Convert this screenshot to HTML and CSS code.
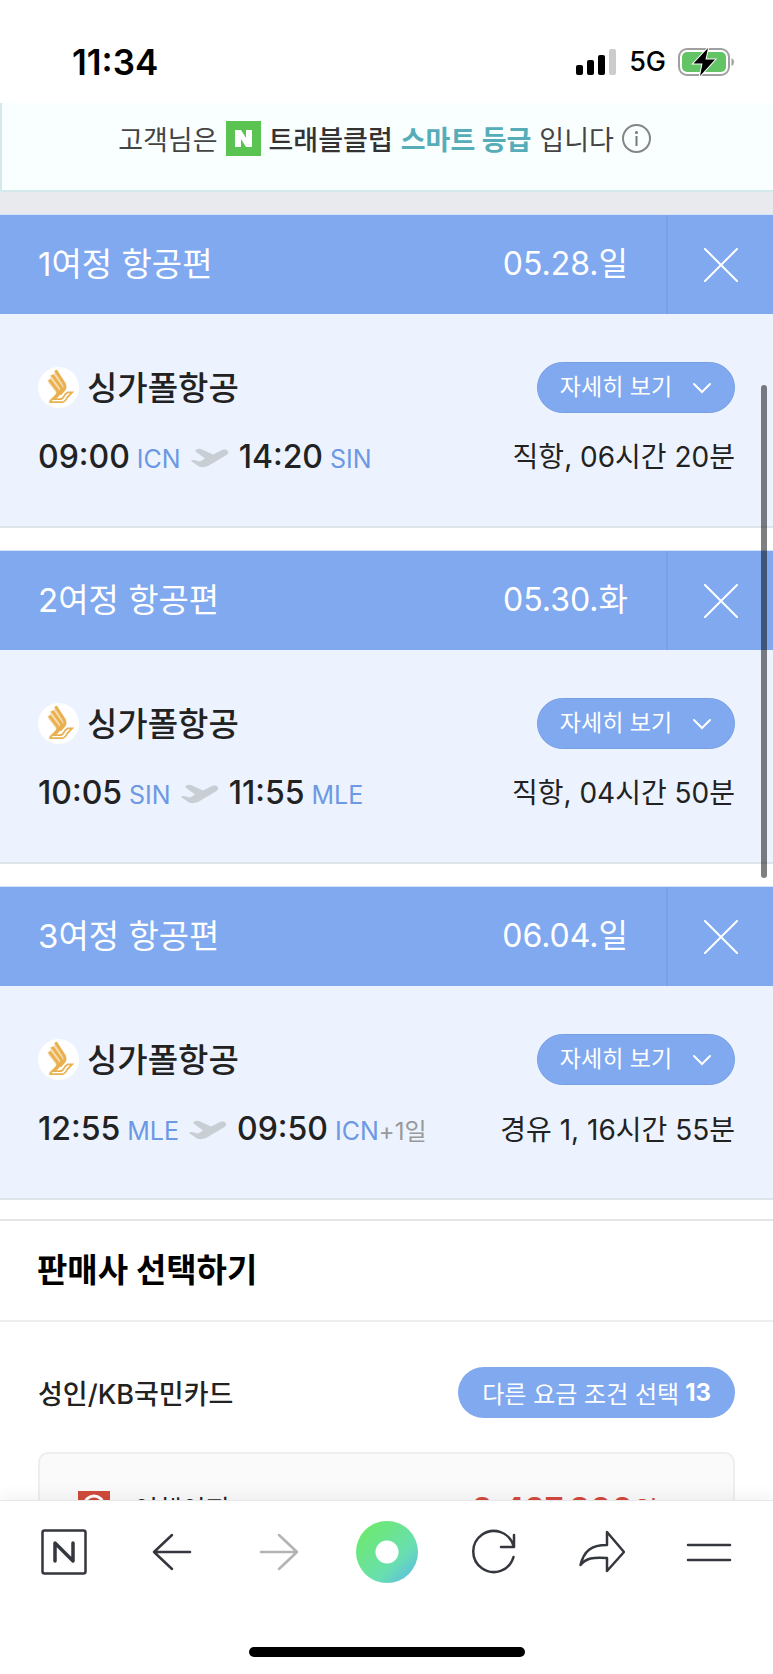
FILE: index.html
```html
<!DOCTYPE html>
<html lang="ko">
<head>
<meta charset="utf-8">
<meta name="viewport" content="width=device-width, initial-scale=1">
<title>항공권</title>
<link rel="stylesheet" href="styles.css">
</head>
<body>
<svg class="sprite" aria-hidden="true">
  <symbol id="close" viewBox="0 0 34 34"><path d="M1 1 33 33M33 1 1 33" fill="none" stroke="currentColor" stroke-width="2" stroke-linecap="round"/></symbol>
  <symbol id="chevron" viewBox="0 0 20 12"><path d="M2 2 10 10 18 2" fill="none" stroke="currentColor" stroke-width="2" stroke-linecap="round"/></symbol>
  <symbol id="plane" viewBox="0 0 38 20"><path d="M0 13Q1 11.500 3 12L9 13.500 14 10.500 4 3Q6 0 10 1L22 6.500 31 2C35 0.500 38 3 37 5.500Q36 7 33 8.500L17 18Q12 20 8 18.500Z" fill="#c8ced4"/></symbol>
  <symbol id="airline" viewBox="0 0 42 42"><circle cx="21" cy="21" r="21" fill="#fff"/><path d="M18 2.500 28 16.500Q30 20 27.500 23.500L18 33 11 33.500 20 28.500 9.500 14.500 13 14 12.500 8 16 8.500Z" fill="#f6dcae"/><g fill="none" stroke="#e9b04f"><path d="M18 3.500 27 17.500Q28.500 20.500 26.500 23.500L22.500 28M14.500 8 23.500 20.500Q25 23 23 25.500L19 30M11.500 13 20 24Q21.500 26 19.500 28.500L15.500 33" stroke-width="3"/><path d="M11.500 36H25Q28 35.500 30 31L35 26 30.500 26Q28 27 26.500 30T22.500 33H16.500L24 26M12 35.500 19 29" stroke-width="1.800"/></g></symbol>
</svg>
<div class="phone">
  <header class="status">
    <time class="clock">11:34</time>
    <div class="status-icons">
      <svg width="41" height="26" viewBox="0 0 41 26" aria-label="signal"><rect x="0" y="16" width="7" height="10" rx="2"/><rect x="11" y="11" width="7" height="15" rx="2"/><rect x="22" y="6" width="7" height="20" rx="2"/><rect x="33" y="0" width="7" height="26" rx="2" fill="#ccc"/></svg>
      <span class="network">5G</span>
      <svg width="57" height="28" viewBox="0 0 57 28" aria-label="battery"><rect x="1" y="1" width="50" height="26" rx="8" fill="#fff" stroke="#a0a0a0" stroke-width="2"/><rect x="4" y="4" width="44" height="20" rx="5" fill="#63c466"/><path d="M53.500 10Q56 11 56 14 56 17 53.500 18Z" fill="#a0a0a0"/><path d="M30 0 15.500 15.500H24.500L22 28 37 11.500H27.500Z" stroke="#fff" stroke-width="2" paint-order="stroke"/></svg>
    </div>
  </header>
  <main class="content">
    <section class="grade">
      <span>고객님은</span>
      <svg class="n-mark" viewBox="0 0 35 35" aria-label="N"><path fill="#5ac351" d="M0 0h35v35H0z"/><path fill="#fff" d="M9 9h6l5 8V9h6v17h-6l-5-8v8H9z"/></svg>
      <strong class="club">트래블클럽</strong>
      <strong class="level">스마트 등급</strong>
      <span>입니다</span>
      <button class="info" aria-label="등급 안내"><svg width="29" height="29" viewBox="0 0 29 29"><circle cx="14.500" cy="14.500" r="13.500" fill="none" stroke="#858585" stroke-width="2"/><circle cx="14.500" cy="8.500" r="1.500" fill="#777"/><path d="M14.500 12v10" stroke="#777" stroke-width="2"/></svg></button>
    </section>

    <article class="trip">
      <header class="trip-head"><h2>1여정 항공편</h2><time>05.28.일</time><button class="remove" aria-label="닫기"><svg><use href="#close"/></svg></button></header>
      <div class="trip-body">
        <div class="row"><div class="airline"><svg><use href="#airline"/></svg><h3>싱가폴항공</h3></div><button class="pill detail"><span>자세히 보기</span><svg><use href="#chevron"/></svg></button></div>
        <div class="row"><div class="route"><b>09:00</b><i>ICN</i><svg><use href="#plane"/></svg><b>14:20</b><i>SIN</i></div><p class="duration">직항, 06시간 20분</p></div>
      </div>
    </article>
    <article class="trip">
      <header class="trip-head"><h2>2여정 항공편</h2><time>05.30.화</time><button class="remove" aria-label="닫기"><svg><use href="#close"/></svg></button></header>
      <div class="trip-body">
        <div class="row"><div class="airline"><svg><use href="#airline"/></svg><h3>싱가폴항공</h3></div><button class="pill detail"><span>자세히 보기</span><svg><use href="#chevron"/></svg></button></div>
        <div class="row"><div class="route"><b>10:05</b><i>SIN</i><svg><use href="#plane"/></svg><b>11:55</b><i>MLE</i></div><p class="duration">직항, 04시간 50분</p></div>
      </div>
    </article>
    <article class="trip">
      <header class="trip-head"><h2>3여정 항공편</h2><time>06.04.일</time><button class="remove" aria-label="닫기"><svg><use href="#close"/></svg></button></header>
      <div class="trip-body">
        <div class="row"><div class="airline"><svg><use href="#airline"/></svg><h3>싱가폴항공</h3></div><button class="pill detail"><span>자세히 보기</span><svg><use href="#chevron"/></svg></button></div>
        <div class="row"><div class="route"><b>12:55</b><i>MLE</i><svg><use href="#plane"/></svg><b>09:50</b><i>ICN</i><small>+1일</small></div><p class="duration">경유 1, 16시간 55분</p></div>
      </div>
    </article>

    <section class="sellers">
      <h2 class="sellers-title">판매사 선택하기</h2>
      <div class="fare-row"><h3>성인/KB국민카드</h3><button class="pill fare">다른 요금 조건 선택 <strong>13</strong></button></div>
      <div class="offer">
        <svg class="offer-logo" viewBox="0 0 32 32" aria-hidden="true"><path fill="#cf4b3c" d="M0 0h32v32H0z"/><ellipse cx="16" cy="13" rx="9" ry="8" fill="none" stroke="#fff" stroke-width="3"/><circle cx="16" cy="13" r="4" fill="#fff"/></svg>
        <span class="seller">여행이지</span>
        <span class="price"><strong>2,427,800</strong>원</span>
      </div>
    </section>
    <div class="scrollbar"></div>
  </main>
  <footer class="browser">
    <nav class="tools">
      <button aria-label="네이버"><svg viewBox="0 0 46 46"><rect x="1.500" y="1.500" width="43" height="43" rx="2"/><path d="M14 32V14L32 32V14" stroke-width="3.500"/></svg></button>
      <button aria-label="뒤로"><svg viewBox="0 0 46 46"><path d="M41 23H5M23 6 5 23 23 40"/></svg></button>
      <button class="off" aria-label="앞으로" disabled><svg viewBox="0 0 46 46"><path d="M5 23H41M23 6 41 23 23 40"/></svg></button>
      <button aria-label="홈"><span class="green-dot"></span></button>
      <button aria-label="새로고침"><svg viewBox="0 0 46 46"><path d="M42.500 28A20.500 20.500 0 1 1 42.500 17M43 6V18H30"/></svg></button>
      <button aria-label="공유"><svg viewBox="0 0 46 46"><path d="M1.500 36C5 22 12 16 28 16V3L45 23 28 42V29C14 28 7 29 1.500 36Z"/></svg></button>
      <button aria-label="메뉴"><svg viewBox="0 0 46 46"><path d="M2 16H44M2 31H44"/></svg></button>
    </nav>
    <div class="home-bar"></div>
  </footer>
</div>
</body>
</html>
```
FILE: styles.css
```css
* { box-sizing: border-box; }
body { margin: 0; background: #fff; color: #222; font-family: Inter, "Noto Sans CJK KR", sans-serif; }
h2, h3, p { margin: 0; font-weight: 400; }
button { border: 0; padding: 0; margin: 0; background: none; color: inherit; font: inherit; display: flex; align-items: center; justify-content: center; }
svg { display: block; flex: none; }
.sprite { position: absolute; width: 0; height: 0; }
.phone { height: 100vh; display: flex; flex-direction: column; overflow: hidden; }

.status { flex: none; height: 103px; padding: 20px 38px 0 72px; display: flex; align-items: center; justify-content: space-between; color: #000; }
.clock { font-size: 35px; font-weight: 600; }
.status-icons { display: flex; align-items: center; gap: 12px; }
.network { font-size: 27px; font-weight: 500; }

.content { position: relative; flex: 1; min-height: 0; overflow: hidden; }
.grade { height: 89px; padding: 0 6px 17px 0; display: flex; align-items: center; justify-content: center; gap: 8px; background: #f9feff; border-left: 2px solid #d3e9ec; border-bottom: 2px solid #d3e9ec; font-size: 27px; color: #444; white-space: nowrap; }
.n-mark { width: 35px; height: 35px; }
.club { font-weight: 500; color: #333; }
.level { font-weight: 700; color: #56adb8; }

.trip { border-bottom: 2px solid #dfe3ea; margin-bottom: 22px; }
.grade + .trip { border-top: 22px solid #e8eaed; }
.trip-head { height: 100px; display: flex; align-items: stretch; border-top: 1px solid #d4e2fa; background: #80a9ef; color: #fff; line-height: 98px; }
.trip-head h2 { flex: 1; padding-left: 38px; font-size: 33px; }
.trip-head time { padding-right: 38px; font-size: 32px; }
.remove { width: 107px; border-left: 2px solid #7aa1e4; }
.remove svg { width: 34px; height: 34px; }
.trip-body { height: 212px; padding: 48px 38px 0; background: #ecf3fe; }
.row { display: flex; align-items: center; justify-content: space-between; white-space: nowrap; }
.airline { display: flex; align-items: center; gap: 8px; }
.airline svg { width: 41px; height: 41px; }
.airline h3 { font-size: 33px; font-weight: 500; line-height: 50px; }
.pill { height: 51px; border-radius: 26px; background: #80a9ef; color: #fff; font-size: 23px; }
.detail { width: 198px; gap: 20px; border: 1px solid #769fe2; }
.detail span { padding-bottom: 6px; }
.detail svg { width: 20px; height: 12px; }
.route { display: flex; align-items: baseline; line-height: 44px; margin-top: 22px; }
.route b { font-size: 32px; font-weight: 500; }
.route i { font-size: 25px; font-style: normal; color: #6c98e4; margin-left: 7px; }
.route svg { width: 38px; height: 20px; margin: 0 10px; }
.route small { font-size: 24px; color: #999; }
.duration { font-size: 28px; line-height: 44px; margin-top: 20px; }

.sellers { border-top: 2px solid #e5e5e5; margin-top: -3px; }
.sellers-title { height: 101px; padding-left: 37px; border-bottom: 2px solid #eee; font-size: 33px; font-weight: 700; line-height: 98px; color: #000; }
.fare-row { display: flex; justify-content: space-between; align-items: center; padding: 45px 38px 34px; }
.fare-row h3 { font-size: 27px; font-weight: 500; }
.fare { padding: 0 24px; gap: 6px; font-size: 24px; }
.offer { margin: 0 38px; height: 150px; border: 2px solid #eee; border-radius: 10px; background: #fafafa; padding: 37px 75px 0 38px; display: flex; align-items: flex-start; }
.offer-logo { width: 32px; height: 32px; }
.seller { flex: 1; margin-left: 24px; font-size: 26px; line-height: 38px; }
.price { font-size: 27px; line-height: 38px; color: #d5483d; }
.price strong { font-size: 32px; font-weight: 700; }
.scrollbar { position: absolute; right: 6px; top: 282px; width: 6px; height: 493px; border-radius: 3px; background: rgb(0 0 0 / 50%); }

.browser { position: relative; flex: none; height: 174px; border-top: 1px solid #e8e8ea; background: #fff; box-shadow: 0 -3px 16px rgb(0 0 0 / 6%); }
.tools { display: flex; justify-content: space-between; align-items: center; padding: 20px 33px 0; }
.tools button { width: 62px; height: 62px; color: #34373d; }
.tools .off { color: #b3b3b3; }
.tools svg { width: 46px; height: 46px; fill: none; stroke: currentColor; stroke-width: 2.5; stroke-linecap: round; stroke-linejoin: round; }
.green-dot { width: 62px; height: 62px; border-radius: 50%; background: radial-gradient(circle, #fff 11px, transparent 12px), linear-gradient(135deg, #6de873 15%, #69dfb0 65%, #58b5ed); }
.home-bar { width: 276px; height: 10px; border-radius: 5px; background: #000; margin: 64px auto 0; }
```
